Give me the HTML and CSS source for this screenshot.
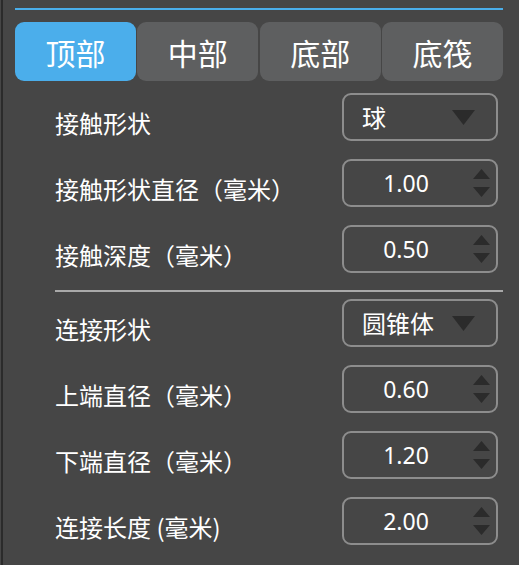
FILE: index.html
```html
<!DOCTYPE html>
<html lang="zh">
<head>
<meta charset="utf-8">
<link rel="stylesheet" href="styles.css">
</head>
<body>
<div class="panel">
  <div class="topline"></div>
  <div class="tabs">
    <div class="tab active">顶部</div>
    <div class="tab">中部</div>
    <div class="tab">底部</div>
    <div class="tab">底筏</div>
  </div>
  <div class="form">
    <div class="group first">
      <div class="row">
        <div class="label">接触形状</div>
        <div class="box select"><span class="sel-text">球</span><svg class="caret" width="23" height="15" viewBox="0 0 23 15"><polygon points="0,0 23,0 11.5,15" /></svg></div>
      </div>
      <div class="row">
        <div class="label">接触形状直径（毫米）</div>
        <div class="box spin"><span class="value">1.00</span><span class="arrows"><svg width="17" height="10" viewBox="0 0 17 10"><polygon points="8.5,0 17,10 0,10"/></svg><svg width="17" height="10" viewBox="0 0 17 10"><polygon points="0,0 17,0 8.5,10"/></svg></span></div>
      </div>
      <div class="row">
        <div class="label">接触深度（毫米）</div>
        <div class="box spin"><span class="value">0.50</span><span class="arrows"><svg width="17" height="10" viewBox="0 0 17 10"><polygon points="8.5,0 17,10 0,10"/></svg><svg width="17" height="10" viewBox="0 0 17 10"><polygon points="0,0 17,0 8.5,10"/></svg></span></div>
      </div>
    </div>
    <div class="sep"></div>
    <div class="group">
      <div class="row">
        <div class="label">连接形状</div>
        <div class="box select"><span class="sel-text">圆锥体</span><svg class="caret" width="23" height="15" viewBox="0 0 23 15"><polygon points="0,0 23,0 11.5,15" /></svg></div>
      </div>
      <div class="row">
        <div class="label">上端直径（毫米）</div>
        <div class="box spin"><span class="value">0.60</span><span class="arrows"><svg width="17" height="10" viewBox="0 0 17 10"><polygon points="8.5,0 17,10 0,10"/></svg><svg width="17" height="10" viewBox="0 0 17 10"><polygon points="0,0 17,0 8.5,10"/></svg></span></div>
      </div>
      <div class="row">
        <div class="label">下端直径（毫米）</div>
        <div class="box spin"><span class="value">1.20</span><span class="arrows"><svg width="17" height="10" viewBox="0 0 17 10"><polygon points="8.5,0 17,10 0,10"/></svg><svg width="17" height="10" viewBox="0 0 17 10"><polygon points="0,0 17,0 8.5,10"/></svg></span></div>
      </div>
      <div class="row">
        <div class="label">连接长度 (毫米)</div>
        <div class="box spin"><span class="value">2.00</span><span class="arrows"><svg width="17" height="10" viewBox="0 0 17 10"><polygon points="8.5,0 17,10 0,10"/></svg><svg width="17" height="10" viewBox="0 0 17 10"><polygon points="0,0 17,0 8.5,10"/></svg></span></div>
      </div>
    </div>
  </div>
</div>
</body>
</html>
```

FILE: styles.css
```css
html, body {
  margin: 0;
  padding: 0;
  background: #464646;
}
body {
  font-family: "Noto Sans", "Noto Sans CJK SC", sans-serif;
  color: #ffffff;
}
.panel {
  margin-left: 1px;
  border-left: 2px solid #2b2b2b;
  height: 565px;
  box-sizing: border-box;
  padding: 8px 16px 0 12px;
}
.topline {
  height: 2px;
  background: #4aaeea;
}
.tabs {
  margin-top: 12px;
  display: grid;
  grid-template-columns: repeat(4, 1fr);
  column-gap: 1.5px;
}
.tab {
  height: 59px;
  border-radius: 9px;
  background: #5e5f60;
  display: flex;
  align-items: center;
  justify-content: center;
  font-family: "Noto Sans CJK SC", sans-serif;
  font-size: 30px;
  line-height: 1;
}
.tab.active {
  background: #4baeeb;
}
.form {
  padding-left: 40px;
}
.group {
  display: flex;
  flex-direction: column;
  gap: 18px;
  padding-right: 5px;
}
.group.first {
  margin-top: 12px;
}
.sep {
  height: 2px;
  background: #a9a9a9;
  margin: 17px 0 7px 0;
}
.row {
  display: flex;
  align-items: center;
  justify-content: space-between;
}
.label {
  font-family: "Noto Sans CJK SC", sans-serif;
  font-size: 24px;
  line-height: 1;
  padding-top: 12px;
  white-space: nowrap;
}
.box {
  width: 156px;
  height: 48px;
  box-sizing: border-box;
  border: 2px solid #8d8d8d;
  border-radius: 9px;
  display: flex;
  align-items: center;
}
.select {
  padding: 0 21px 0 18px;
  justify-content: space-between;
}
.sel-text {
  font-family: "Noto Sans CJK SC", sans-serif;
  font-size: 24px;
  line-height: 1;
}
.caret polygon, .arrows polygon {
  fill: #2b2b2b;
}
.spin .value {
  flex: 1;
  text-align: center;
  margin-right: 5px;
  font-size: 23px;
  line-height: 1;
}
.arrows {
  display: flex;
  flex-direction: column;
  gap: 8px;
  margin-right: 6px;
}
.arrows svg {
  display: block;
}
```
